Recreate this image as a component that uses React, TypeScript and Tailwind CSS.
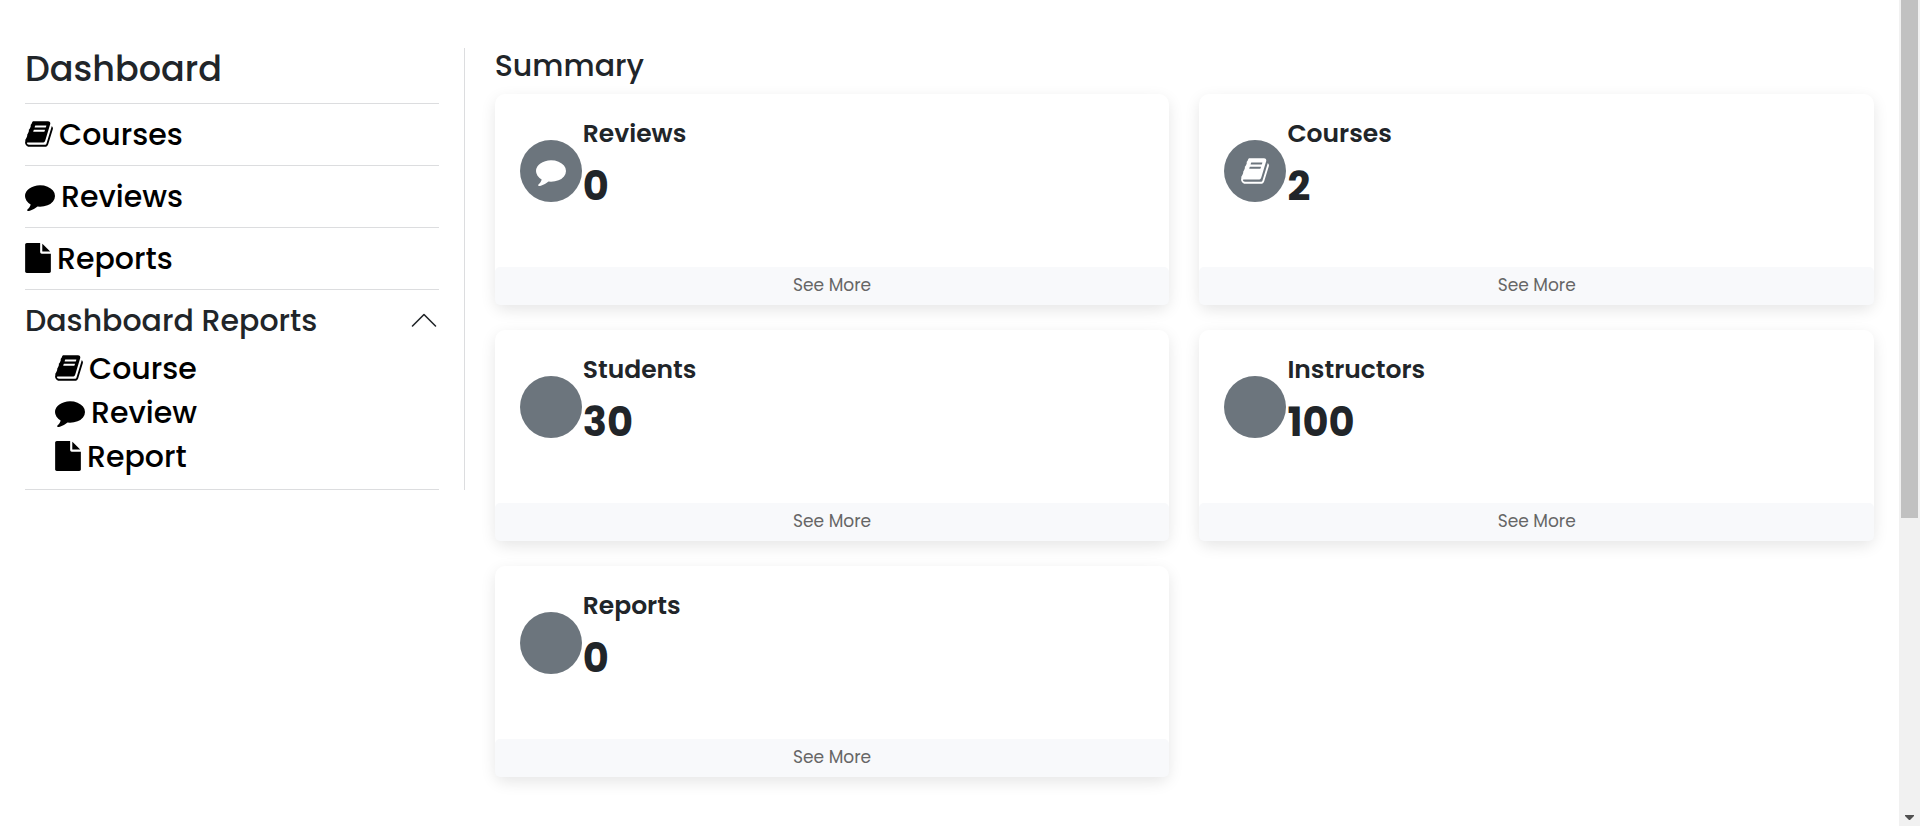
import { useState } from "react";

type IconProps = { className?: string };

function BookIcon({ className = "" }: IconProps) {
  return (
    <svg viewBox="64 0 1664 1792" className={`h-[30px] w-[28px] ${className}`} fill="currentColor" aria-hidden="true">
      <path d="M1703 478q40 57 18 129l-275 906q-19 64-76.500 107.500t-122.500 43.500h-923q-77 0-148.500-53.500t-99.500-131.500q-24-67-2-127 0-4 3-27t4-37q1-8-3-21.500t-3-19.500q2-11 8-21t16.500-23.500 16.500-23.500q23-38 45-91.500t30-91.500q3-10 .5-30t-.5-28q3-11 17-28t17-23q21-36 42-92t25-90q1-9-2.500-32t.5-28q4-13 22-30.500t22-22.500q19-26 42.500-84.500t27.500-96.500q1-8-3-25.500t-2-26.500q2-8 9-18t18-23 17-21q8-12 16.500-30.500t15-35 16-36 19.500-32 26.500-23.500 36-11.500 47.500 5.500l-1 3q38-9 51-9h761q74 0 114 56t18 130l-274 906q-36 119-71.500 153.500t-128.500 34.500h-869q-27 0-38 15-11 16-1 43 24 70 144 70h923q29 0 56-15.500t35-41.500l300-987q7-22 5-57 38 15 59 43zm-1064 2q-4 13 2 22.500t20 9.500h608q13 0 25.500-9.500t16.500-22.500l21-64q4-13-2-22.500t-20-9.500h-608q-13 0-25.500 9.500t-16.500 22.500zm-83 256q-4 13 2 22.500t20 9.500h608q13 0 25.500-9.500t16.500-22.500l21-64q4-13-2-22.500t-20-9.500h-608q-13 0-25.500 9.500t-16.500 22.500z" />
    </svg>
  );
}

function CommentIcon({ className = "" }: IconProps) {
  return (
    <svg viewBox="0 0 1792 1792" className={`h-[30px] w-[30px] ${className}`} fill="currentColor" aria-hidden="true">
      <path d="M1792 896q0 174-120 321.500t-326 233-450 85.500q-70 0-145-8-198 175-460 242-49 14-114 22-17 2-30.500-9t-17.500-29v-1q-3-4-.5-12t2-10 4.500-9.500l6-9 7-8.500 8-9q7-8 31-34.500t34.500-38 31-39.500 32.500-51 27-59 26-76q-157-89-247.500-220t-90.500-281q0-130 71-248.500t191-204.500 286-136.500 348-50.500q244 0 450 85.500t326 233 120 321.500z" />
    </svg>
  );
}

function FileIcon({ className = "" }: IconProps) {
  return (
    <svg viewBox="128 0 1536 1792" className={`h-[30px] w-[26px] ${className}`} fill="currentColor" aria-hidden="true">
      <path d="M1152 512v-472q22 14 36 28l408 408q14 14 28 36h-472zm-128 32q0 40 28 68t68 28h544v1056q0 40-28 68t-68 28h-1344q-40 0-68-28t-28-68v-1600q0-40 28-68t68-28h800v544z" />
    </svg>
  );
}

const links = [
  { label: "Courses", Icon: BookIcon },
  { label: "Reviews", Icon: CommentIcon },
  { label: "Reports", Icon: FileIcon },
];

const reportLinks = [
  { label: "Course", Icon: BookIcon },
  { label: "Review", Icon: CommentIcon },
  { label: "Report", Icon: FileIcon },
];

const cards = [
  { title: "Reviews", value: 0, Icon: CommentIcon },
  { title: "Courses", value: 2, Icon: BookIcon },
  { title: "Students", value: 30, Icon: null },
  { title: "Instructors", value: 100, Icon: null },
  { title: "Reports", value: 0, Icon: null },
];

function Sidebar() {
  const [open, setOpen] = useState(true);
  return (
    <aside className="w-1/4 shrink-0 pr-[10px]">
      <nav className="border-r border-[#dcdddf] px-[25px] font-medium">
        <h1 className="h-[56px] border-b border-[#dcdddf] pt-px text-[35px] leading-[40px]">Dashboard</h1>
        <ul>
          {links.map(({ label, Icon }) => (
            <li key={label} className="border-b border-[#dcdddf]">
              <a href="#" className="flex h-[61px] items-center gap-[6px] pb-px text-[30px] text-black">
                <Icon />
                {label}
              </a>
            </li>
          ))}
          <li className="border-b border-[#dcdddf] pb-[11px]">
            <button
              type="button"
              aria-expanded={open}
              onClick={() => setOpen(!open)}
              className="flex h-[56px] w-full items-center justify-between pt-[4px] pr-[2px] text-[30px]"
            >
              Dashboard Reports
              <svg viewBox="0 0 26 16" className={`h-[16px] w-[26px] ${open ? "" : "rotate-180"}`} fill="none" stroke="currentColor" strokeWidth="1.6" strokeLinecap="round" strokeLinejoin="round" aria-hidden="true">
                <path d="M1.500 14 13 2.500 24.500 14" />
              </svg>
            </button>
            {open && (
              <ul className="pl-[30px]">
                {reportLinks.map(({ label, Icon }) => (
                  <li key={label}>
                    <a href="#" className="flex h-[44px] items-center gap-[6px] text-[30px] text-black">
                      <Icon />
                      {label}
                    </a>
                  </li>
                ))}
              </ul>
            )}
          </li>
        </ul>
      </nav>
    </aside>
  );
}

export default function App() {
  return (
    <div className="flex min-h-screen bg-white font-['Poppins','Inter',sans-serif] text-[#212529]">
      <div className="flex min-w-0 flex-1 items-start pt-[48px] pb-[50px]">
        <Sidebar />
        <main className="min-w-0 flex-1 pr-[25px] pl-[20px]">
          <h2 className="h-[46px] text-[30px] leading-[36px] font-medium">Summary</h2>
          <div className="grid grid-cols-2 gap-x-[30px] gap-y-[25px]">
            {cards.map(({ title, value, Icon }) => (
              <article key={title} className="rounded-[10px] bg-white shadow-[0_5px_15px_rgba(0,0,0,0.1)]">
                <div className="flex h-[173px] items-start gap-px px-[25px] pt-[23px]">
                  <span className="mt-[23px] flex size-[62px] shrink-0 items-center justify-center rounded-full bg-[#6c757d] text-white">
                    {Icon && <Icon />}
                  </span>
                  <div>
                    <h3 className="text-[25px] leading-[34px] font-semibold">{title}</h3>
                    <p className="mt-[11px] text-[40px] leading-[48px] font-bold">{value}</p>
                  </div>
                </div>
                <a href="#" className="flex h-[38px] items-center justify-center rounded-[5px] bg-[#f8f9fb] text-[17px] text-[#666666]">
                  See More
                </a>
              </article>
            ))}
          </div>
        </main>
      </div>
      <div aria-hidden="true" className="sticky top-0 flex h-screen w-[21px] shrink-0 flex-col items-center justify-between bg-[#f1f1f1] pb-[6px]">
        <div className="h-[518px] w-[17px] bg-[#c1c1c1]" />
        <svg viewBox="0 0 9 5" className="h-[5px] w-[9px]" fill="#505050">
          <path d="M0 0h9v1L5 5H4L0 1z" />
        </svg>
      </div>
    </div>
  );
}
